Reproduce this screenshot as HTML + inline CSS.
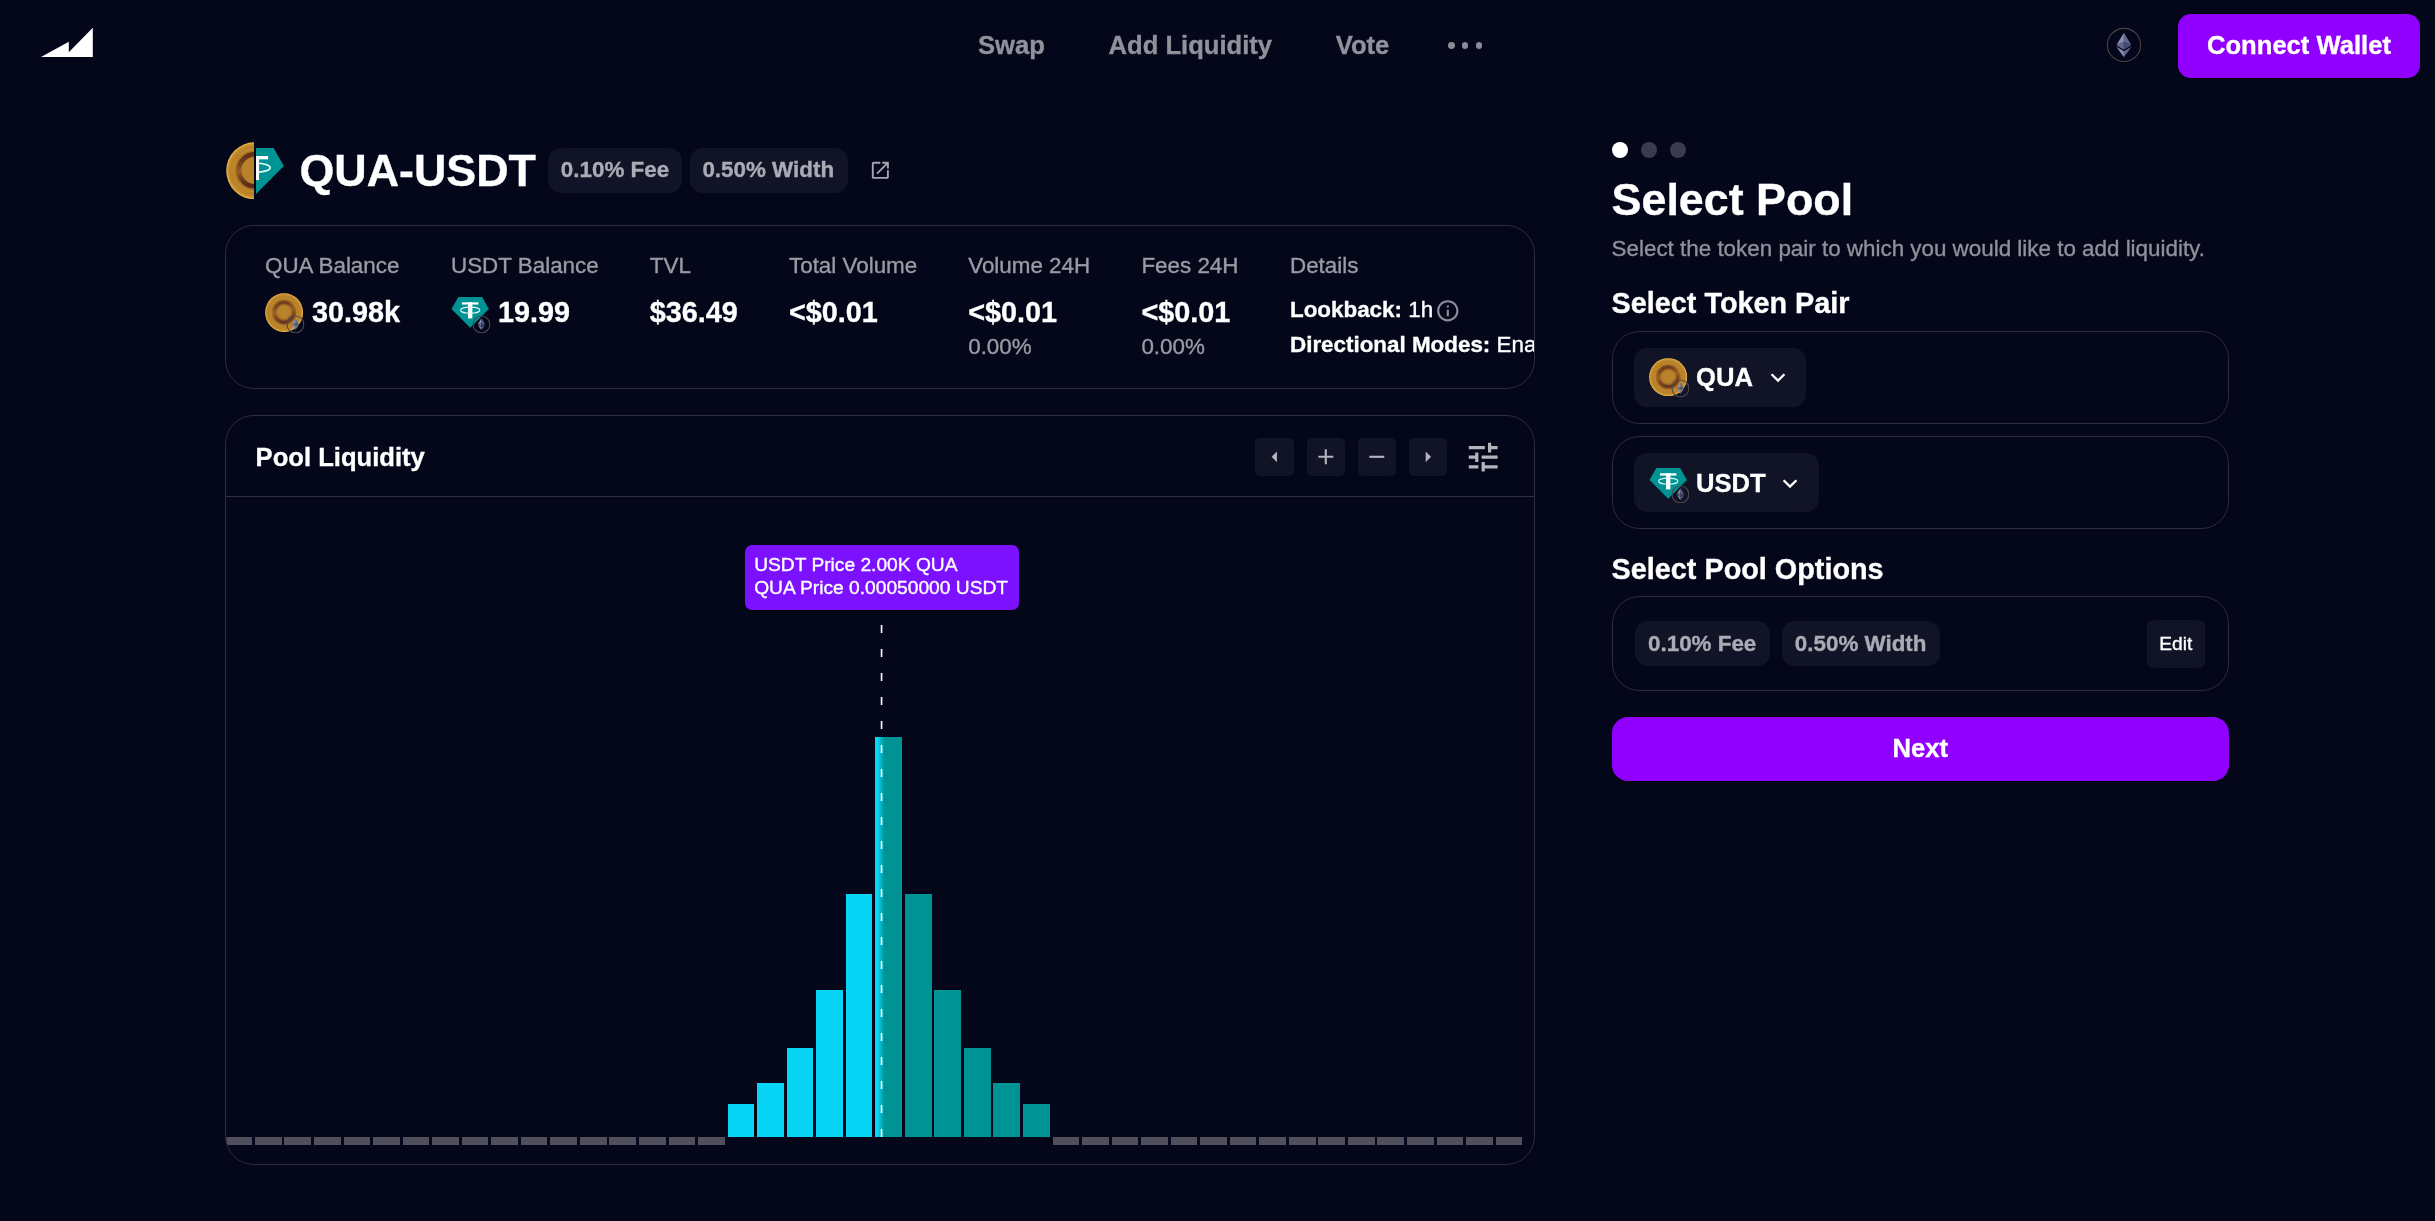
<!DOCTYPE html>
<html><head><meta charset="utf-8"><title>Maverick - Add Liquidity</title>
<style>
html,body{margin:0;padding:0;background:#04061A;}
body{width:2435px;height:1221px;position:relative;overflow:hidden;font-family:"Liberation Sans",sans-serif;}
.t{position:absolute;white-space:nowrap;line-height:1;-webkit-text-stroke:0.35px currentColor;}
.b{position:absolute;}
#root{position:absolute;left:0;top:0;width:2435px;height:1221px;will-change:transform;}
</style></head><body><div id="root">

<svg width="0" height="0" style="position:absolute">
<defs>
<radialGradient id="coinG" cx="50%" cy="50%" r="50%">
  <stop offset="0" stop-color="#B8822B"/><stop offset="0.86" stop-color="#B9832B"/><stop offset="0.94" stop-color="#CC9431"/><stop offset="0.985" stop-color="#EDB848"/><stop offset="1" stop-color="#F8CC5C"/>
</radialGradient>
<linearGradient id="ringG" x1="0" y1="0" x2="0.25" y2="1">
  <stop offset="0" stop-color="#5A2A1A"/><stop offset="0.22" stop-color="#6B3A1C"/><stop offset="0.5" stop-color="#9A5E21"/><stop offset="0.78" stop-color="#6B3A1C"/><stop offset="1" stop-color="#5A2A1A"/>
</linearGradient>
<filter id="blur2" x="-20%" y="-20%" width="140%" height="140%"><feGaussianBlur stdDeviation="2.1"/></filter>
<filter id="blur1" x="-20%" y="-20%" width="140%" height="140%"><feGaussianBlur stdDeviation="1.3"/></filter>
<symbol id="coin" viewBox="0 0 100 100">
  <circle cx="50" cy="50" r="49.6" fill="url(#coinG)"/>
  <circle cx="50" cy="49.5" r="29.5" fill="none" stroke="#A96D25" stroke-width="12.5" opacity="0.75"/>
  <circle cx="50" cy="49.5" r="36.4" fill="none" stroke="#D0982F" stroke-width="1.4" opacity="0.9"/>
  <g filter="url(#blur1)"><circle cx="50" cy="49.2" r="27.6" fill="none" stroke="url(#ringG)" stroke-width="8.2"/></g>
  <path d="M62 62 L72 72" stroke="#8A5220" stroke-width="5" filter="url(#blur1)" opacity="0.7"/>
</symbol>
<symbol id="coinS" viewBox="0 0 100 100" preserveAspectRatio="none">
  <circle cx="50" cy="50" r="49.6" fill="url(#coinG)"/>
  <circle cx="50" cy="49.5" r="27" fill="none" stroke="#A96D25" stroke-width="11" opacity="0.7"/>
  <circle cx="50" cy="49.5" r="33.5" fill="none" stroke="#D0982F" stroke-width="1.4" opacity="0.8"/>
  <g filter="url(#blur2)"><circle cx="50" cy="49.2" r="25.4" fill="none" stroke="url(#ringG)" stroke-width="8.4"/></g>
  <path d="M60 60 L69 69" stroke="#8A5220" stroke-width="5" filter="url(#blur2)" opacity="0.7"/>
</symbol>
<symbol id="gem" viewBox="0 0 100 100">
  <polygon points="19,10.2 81,10.2 98.7,41.8 50,90.8 1.3,41.8" fill="#009393"/>
  <rect x="28.6" y="24.3" width="42.8" height="5.8" fill="#fff"/>
  <rect x="44.4" y="24.3" width="11.2" height="41.8" fill="#fff"/>
  <ellipse cx="50" cy="44.6" rx="25" ry="7.8" fill="none" stroke="#E4F7F5" stroke-width="2.8"/>
</symbol>
<symbol id="eth" viewBox="0 0 16 26">
  <polygon points="8,0 0,13.2 8,9.6" fill="#8A92B2"/>
  <polygon points="8,0 16,13.2 8,9.6" fill="#62688F"/>
  <polygon points="0,13.2 8,9.6 8,18" fill="#62688F"/>
  <polygon points="16,13.2 8,9.6 8,18" fill="#454A75"/>
  <polygon points="0,14.7 8,19.5 8,26" fill="#8A92B2"/>
  <polygon points="16,14.7 8,19.5 8,26" fill="#62688F"/>
</symbol>
</defs>
</svg>

<svg class="b" style="left:30.00px;top:15.00px;" width="80.00" height="55.00"><polygon points="11,41.9 38.8,26.8 38.8,37.2 62.8,12.8 62.8,41.9" fill="#fff"/></svg>
<div class="t" style="left:978.00px;top:33.00px;font-size:25.6px;font-weight:700;color:#91919B;">Swap</div>
<div class="t" style="left:1108.60px;top:33.00px;font-size:25.6px;font-weight:700;color:#91919B;">Add Liquidity</div>
<div class="t" style="left:1335.80px;top:33.00px;font-size:25.6px;font-weight:700;color:#91919B;">Vote</div>
<div class="b" style="left:1447.90px;top:42.10px;width:6.80px;height:6.80px;border-radius:50%;background:#8A8A96"></div>
<div class="b" style="left:1461.70px;top:42.10px;width:6.80px;height:6.80px;border-radius:50%;background:#8A8A96"></div>
<div class="b" style="left:1475.50px;top:42.10px;width:6.80px;height:6.80px;border-radius:50%;background:#8A8A96"></div>
<svg class="b" style="left:2104.00px;top:25.00px;" width="40.00" height="40.00"><circle cx="20" cy="19.9" r="16.6" fill="none" stroke="#484543" stroke-width="1.15"/><use href="#eth" x="12.1" y="7.8" width="15.6" height="24.5"/></svg>
<div class="b" style="left:2178.00px;top:14.00px;width:242.00px;height:64.00px;border-radius:12.8px;background:#9100FF;box-shadow:0 1px 2px rgba(0,0,0,.6)"></div>
<div class="t" style="left:2207.00px;top:33.00px;font-size:25.6px;font-weight:700;color:#FFFFFF;">Connect Wallet</div>
<div class="b" style="left:225.6px;top:141.7px;width:28.6px;height:57.6px;overflow:hidden"><svg width="57.6" height="57.6" style="position:absolute;left:0;top:0"><use href="#coin" width="57.6" height="57.6"/></svg></div>
<div class="b" style="left:255.9px;top:141.7px;width:29.4px;height:57.6px;overflow:hidden"><svg width="57.6" height="57.6" style="position:absolute;left:-28.8px;top:0px"><use href="#gem" width="57.6" height="57.6"/></svg></div>
<div class="t" style="left:299.50px;top:148.00px;font-size:44.8px;font-weight:700;color:#FFFFFF;">QUA-USDT</div>
<div class="b" style="left:548.00px;top:148.00px;width:134.00px;height:45.00px;border-radius:12.8px;background:#111326"></div>
<div class="t" style="left:560.80px;top:159.00px;font-size:22.4px;font-weight:700;color:#ABABB5;">0.10% Fee</div>
<div class="b" style="left:690.00px;top:148.00px;width:158.00px;height:45.00px;border-radius:12.8px;background:#111326"></div>
<div class="t" style="left:702.40px;top:159.00px;font-size:22.4px;font-weight:700;color:#ABABB5;">0.50% Width</div>
<svg class="b" style="left:868.95px;top:158.75px;" width="22.70" height="22.70" viewBox="0 0 24 24"><path d="M19 19H5V5h7V3H5c-1.11 0-2 .9-2 2v14c0 1.1.89 2 2 2h14c1.1 0 2-.9 2-2v-7h-2v7zM14 3v2h3.59l-9.83 9.83 1.41 1.41L19 6.41V10h2V3h-7z" fill="#A6A6B1"/></svg>
<div class="b" style="left:225.00px;top:225.00px;width:1310.00px;height:164.00px;border:1px solid #2C2D41;border-radius:28.8px;box-sizing:border-box"></div>
<div class="b" style="left:226px;top:226px;width:1308px;height:162px;overflow:hidden">
<div class="t" style="left:39.00px;top:29.00px;font-size:22.4px;font-weight:400;color:#9B9BA4;">QUA Balance</div>
<div class="t" style="left:225.00px;top:29.00px;font-size:22.4px;font-weight:400;color:#9B9BA4;">USDT Balance</div>
<div class="t" style="left:423.80px;top:29.00px;font-size:22.4px;font-weight:400;color:#9B9BA4;">TVL</div>
<div class="t" style="left:563.00px;top:29.00px;font-size:22.4px;font-weight:400;color:#9B9BA4;">Total Volume</div>
<div class="t" style="left:742.20px;top:29.00px;font-size:22.4px;font-weight:400;color:#9B9BA4;">Volume 24H</div>
<div class="t" style="left:915.40px;top:29.00px;font-size:22.4px;font-weight:400;color:#9B9BA4;">Fees 24H</div>
<div class="t" style="left:1064.00px;top:29.00px;font-size:22.4px;font-weight:400;color:#9B9BA4;">Details</div>
<div class="t" style="left:86.00px;top:72.00px;font-size:28.8px;font-weight:700;color:#FFFFFF;">30.98k</div>
<div class="t" style="left:272.00px;top:72.00px;font-size:28.8px;font-weight:700;color:#FFFFFF;">19.99</div>
<div class="t" style="left:423.80px;top:72.00px;font-size:28.8px;font-weight:700;color:#FFFFFF;">$36.49</div>
<div class="t" style="left:563.00px;top:72.00px;font-size:28.8px;font-weight:700;color:#FFFFFF;">&lt;$0.01</div>
<div class="t" style="left:742.20px;top:72.00px;font-size:28.8px;font-weight:700;color:#FFFFFF;">&lt;$0.01</div>
<div class="t" style="left:915.40px;top:72.00px;font-size:28.8px;font-weight:700;color:#FFFFFF;">&lt;$0.01</div>
<div class="t" style="left:742.20px;top:110.00px;font-size:22.4px;font-weight:400;color:#9B9BA4;">0.00%</div>
<div class="t" style="left:915.40px;top:110.00px;font-size:22.4px;font-weight:400;color:#9B9BA4;">0.00%</div>
<div class="t" style="left:1064.00px;top:73.00px;font-size:22.4px;font-weight:700;color:#FFFFFF;">Lookback: <span style="font-weight:400">1h</span></div>
<div class="t" style="left:1064.00px;top:108.00px;font-size:22.4px;font-weight:700;color:#FFFFFF;">Directional Modes: <span style="font-weight:400">Enabled</span></div>
</div>
<svg class="b" style="left:264.90px;top:292.90px;" width="38.20" height="39.20"><use href="#coinS" width="38.2" height="39.2"/></svg>
<svg class="b" style="left:286.10px;top:314.50px;" width="18.80" height="18.80"><circle cx="9.4" cy="9.4" r="8.4" fill="none" stroke="#4D4A48" stroke-width="1.1"/><use href="#eth" x="5.800000000000001" y="2.9000000000000004" width="7.2" height="12.6"/></svg>
<svg class="b" style="left:451.00px;top:293.30px;" width="38.40" height="38.40"><use href="#gem" width="38.4" height="38.4"/></svg>
<svg class="b" style="left:472.00px;top:314.60px;" width="18.80" height="18.80"><circle cx="9.4" cy="9.4" r="8.4" fill="none" stroke="#4D4A48" stroke-width="1.1"/><use href="#eth" x="5.800000000000001" y="2.9000000000000004" width="7.2" height="12.6"/></svg>
<svg class="b" style="left:1435.00px;top:298.00px;" width="25.60" height="25.60" viewBox="0 0 24 24"><path d="M11 7h2v2h-2zm0 4h2v6h-2zm1-9C6.48 2 2 6.48 2 12s4.48 10 10 10 10-4.48 10-10S17.520 2 12 2zm0 18c-4.410 0-8-3.590-8-8s3.590-8 8-8 8 3.590 8 8-3.590 8-8 8z" fill="#8E8E9A"/></svg>
<div class="b" style="left:225.00px;top:415.00px;width:1310.00px;height:750.00px;border:1px solid #2C2D41;border-radius:28.8px;box-sizing:border-box"></div>
<div class="b" style="left:226px;top:416px;width:1308px;height:748px;overflow:hidden;border-radius:27.8px">
<div class="b" style="left:-0.60px;top:721.00px;width:26.70px;height:7.80px;background:#504F5B"></div>
<div class="b" style="left:28.94px;top:721.00px;width:26.70px;height:7.80px;background:#504F5B"></div>
<div class="b" style="left:58.48px;top:721.00px;width:26.70px;height:7.80px;background:#504F5B"></div>
<div class="b" style="left:88.02px;top:721.00px;width:26.70px;height:7.80px;background:#504F5B"></div>
<div class="b" style="left:117.56px;top:721.00px;width:26.70px;height:7.80px;background:#504F5B"></div>
<div class="b" style="left:147.10px;top:721.00px;width:26.70px;height:7.80px;background:#504F5B"></div>
<div class="b" style="left:176.64px;top:721.00px;width:26.70px;height:7.80px;background:#504F5B"></div>
<div class="b" style="left:206.18px;top:721.00px;width:26.70px;height:7.80px;background:#504F5B"></div>
<div class="b" style="left:235.72px;top:721.00px;width:26.70px;height:7.80px;background:#504F5B"></div>
<div class="b" style="left:265.26px;top:721.00px;width:26.70px;height:7.80px;background:#504F5B"></div>
<div class="b" style="left:294.80px;top:721.00px;width:26.70px;height:7.80px;background:#504F5B"></div>
<div class="b" style="left:324.34px;top:721.00px;width:26.70px;height:7.80px;background:#504F5B"></div>
<div class="b" style="left:353.88px;top:721.00px;width:26.70px;height:7.80px;background:#504F5B"></div>
<div class="b" style="left:383.42px;top:721.00px;width:26.70px;height:7.80px;background:#504F5B"></div>
<div class="b" style="left:412.96px;top:721.00px;width:26.70px;height:7.80px;background:#504F5B"></div>
<div class="b" style="left:442.50px;top:721.00px;width:26.70px;height:7.80px;background:#504F5B"></div>
<div class="b" style="left:472.04px;top:721.00px;width:26.70px;height:7.80px;background:#504F5B"></div>
<div class="b" style="left:501.58px;top:688.00px;width:26.70px;height:33.00px;background:#08D5F5"></div>
<div class="b" style="left:531.12px;top:667.00px;width:26.70px;height:54.00px;background:#08D5F5"></div>
<div class="b" style="left:560.66px;top:631.50px;width:26.70px;height:89.50px;background:#08D5F5"></div>
<div class="b" style="left:590.20px;top:573.50px;width:26.70px;height:147.50px;background:#08D5F5"></div>
<div class="b" style="left:619.74px;top:478.00px;width:26.70px;height:243.00px;background:#08D5F5"></div>
<div class="b" style="left:649.28px;top:321.00px;width:26.70px;height:400.00px;background:linear-gradient(90deg,#08D5F5 0,#08D5F5 2.7px,#009393 9.4px,#009393 100%)"></div>
<div class="b" style="left:678.82px;top:478.00px;width:26.70px;height:243.00px;background:#009393"></div>
<div class="b" style="left:708.36px;top:573.50px;width:26.70px;height:147.50px;background:#009393"></div>
<div class="b" style="left:737.90px;top:631.50px;width:26.70px;height:89.50px;background:#009393"></div>
<div class="b" style="left:767.44px;top:667.00px;width:26.70px;height:54.00px;background:#009393"></div>
<div class="b" style="left:796.98px;top:688.00px;width:26.70px;height:33.00px;background:#009393"></div>
<div class="b" style="left:826.52px;top:721.00px;width:26.70px;height:7.80px;background:#504F5B"></div>
<div class="b" style="left:856.06px;top:721.00px;width:26.70px;height:7.80px;background:#504F5B"></div>
<div class="b" style="left:885.60px;top:721.00px;width:26.70px;height:7.80px;background:#504F5B"></div>
<div class="b" style="left:915.14px;top:721.00px;width:26.70px;height:7.80px;background:#504F5B"></div>
<div class="b" style="left:944.68px;top:721.00px;width:26.70px;height:7.80px;background:#504F5B"></div>
<div class="b" style="left:974.22px;top:721.00px;width:26.70px;height:7.80px;background:#504F5B"></div>
<div class="b" style="left:1003.76px;top:721.00px;width:26.70px;height:7.80px;background:#504F5B"></div>
<div class="b" style="left:1033.30px;top:721.00px;width:26.70px;height:7.80px;background:#504F5B"></div>
<div class="b" style="left:1062.84px;top:721.00px;width:26.70px;height:7.80px;background:#504F5B"></div>
<div class="b" style="left:1092.38px;top:721.00px;width:26.70px;height:7.80px;background:#504F5B"></div>
<div class="b" style="left:1121.92px;top:721.00px;width:26.70px;height:7.80px;background:#504F5B"></div>
<div class="b" style="left:1151.46px;top:721.00px;width:26.70px;height:7.80px;background:#504F5B"></div>
<div class="b" style="left:1181.00px;top:721.00px;width:26.70px;height:7.80px;background:#504F5B"></div>
<div class="b" style="left:1210.54px;top:721.00px;width:26.70px;height:7.80px;background:#504F5B"></div>
<div class="b" style="left:1240.08px;top:721.00px;width:26.70px;height:7.80px;background:#504F5B"></div>
<div class="b" style="left:1269.62px;top:721.00px;width:26.70px;height:7.80px;background:#504F5B"></div>
</div>
<div class="t" style="left:255.60px;top:445.00px;font-size:25.6px;font-weight:700;color:#FFFFFF;">Pool Liquidity</div>
<div class="b" style="left:226.00px;top:496.00px;width:1308.00px;height:1.00px;background:#2C2D41"></div>
<div class="b" style="left:1255.00px;top:438.00px;width:39.00px;height:38.00px;border-radius:4.8px;background:#111326"></div>
<svg class="b" style="left:1261.80px;top:444.20px;" width="25.60" height="25.60" viewBox="0 0 24 24"><path d="M14 7l-5 5 5 5V7z" fill="#B4B4BC"/></svg>
<div class="b" style="left:1307.00px;top:438.00px;width:38.00px;height:38.00px;border-radius:4.8px;background:#111326"></div>
<svg class="b" style="left:1313.00px;top:444.20px;" width="25.60" height="25.60" viewBox="0 0 24 24"><path d="M19 13h-6v6h-2v-6H5v-2h6V5h2v6h6v2z" fill="#B4B4BC"/></svg>
<div class="b" style="left:1358.00px;top:438.00px;width:38.00px;height:38.00px;border-radius:4.8px;background:#111326"></div>
<svg class="b" style="left:1364.20px;top:444.20px;" width="25.60" height="25.60" viewBox="0 0 24 24"><path d="M19 13H5v-2h14v2z" fill="#B4B4BC"/></svg>
<div class="b" style="left:1409.00px;top:438.00px;width:38.00px;height:38.00px;border-radius:4.8px;background:#111326"></div>
<svg class="b" style="left:1415.40px;top:444.20px;" width="25.60" height="25.60" viewBox="0 0 24 24"><path d="M10 17l5-5-5-5v10z" fill="#B4B4BC"/></svg>
<svg class="b" style="left:1464.00px;top:438.00px;" width="38.40" height="38.40" viewBox="0 0 24 24"><path d="M3 17v2h6v-2H3zM3 5v2h10V5H3zm10 16v-2h8v-2h-8v-2h-2v6h2zM7 9v2H3v2h4v2h2V9H7zm14 4v-2H11v2h10zm-6-4h2V7h4V5h-4V3h-2v6z" fill="#B4B4BC"/></svg>
<div class="b" style="left:744.50px;top:544.60px;width:274.30px;height:65.00px;border-radius:7px;background:#7C11FF"></div>
<div class="t" style="left:754.20px;top:555.00px;font-size:19.2px;font-weight:400;color:#FFFFFF;">USDT Price 2.00K QUA</div>
<div class="t" style="left:754.20px;top:578.00px;font-size:19.2px;font-weight:400;color:#FFFFFF;">QUA Price 0.00050000 USDT</div>
<svg class="b" style="left:879.00px;top:620.00px;" width="5.00" height="520.00"><line x1="2.55" y1="5.0" x2="2.55" y2="517" stroke="#fff" stroke-width="1.6" stroke-dasharray="8 16"/></svg>
<div class="b" style="left:1612.00px;top:142.00px;width:16.00px;height:16.00px;border-radius:50%;background:#fff"></div>
<div class="b" style="left:1641.00px;top:142.00px;width:16.00px;height:16.00px;border-radius:50%;background:#3A3B4E"></div>
<div class="b" style="left:1670.00px;top:142.00px;width:16.00px;height:16.00px;border-radius:50%;background:#3A3B4E"></div>
<div class="t" style="left:1611.60px;top:177.00px;font-size:44.8px;font-weight:700;color:#FFFFFF;">Select Pool</div>
<div class="t" style="left:1611.60px;top:238.00px;font-size:22.4px;font-weight:400;color:#91919B;">Select the token pair to which you would like to add liquidity.</div>
<div class="t" style="left:1611.60px;top:289.00px;font-size:28.8px;font-weight:700;color:#FFFFFF;">Select Token Pair</div>
<div class="b" style="left:1612.00px;top:331.00px;width:617.00px;height:93.00px;border:1px solid #2C2D41;border-radius:27.5px;box-sizing:border-box"></div>
<div class="b" style="left:1612.00px;top:436.00px;width:617.00px;height:93.00px;border:1px solid #2C2D41;border-radius:27.5px;box-sizing:border-box"></div>
<div class="b" style="left:1634.00px;top:348.00px;width:172.00px;height:59.00px;border-radius:12.8px;background:#111326"></div>
<div class="b" style="left:1634.00px;top:453.00px;width:185.00px;height:59.00px;border-radius:12.8px;background:#111326"></div>
<svg class="b" style="left:1649.40px;top:357.80px;" width="38.40" height="38.40"><use href="#coinS" width="38.4" height="38.4"/></svg>
<svg class="b" style="left:1670.50px;top:379.20px;" width="18.80" height="18.80"><circle cx="9.4" cy="9.4" r="8.4" fill="none" stroke="#4D4A48" stroke-width="1.1"/><use href="#eth" x="5.800000000000001" y="2.9000000000000004" width="7.2" height="12.6"/></svg>
<svg class="b" style="left:1649.40px;top:463.60px;" width="38.40" height="38.40"><use href="#gem" width="38.4" height="38.4"/></svg>
<svg class="b" style="left:1670.50px;top:484.50px;" width="18.80" height="18.80"><circle cx="9.4" cy="9.4" r="8.4" fill="none" stroke="#4D4A48" stroke-width="1.1"/><use href="#eth" x="5.800000000000001" y="2.9000000000000004" width="7.2" height="12.6"/></svg>
<div class="t" style="left:1696.00px;top:365.00px;font-size:25.6px;font-weight:700;color:#FFFFFF;">QUA</div>
<div class="t" style="left:1696.00px;top:471.00px;font-size:25.6px;font-weight:700;color:#FFFFFF;">USDT</div>
<svg class="b" style="left:1768.00px;top:368.00px;" width="20.00" height="20.00"><polyline points="3.6,6.2 10,12.6 16.4,6.2" fill="none" stroke="#fff" stroke-width="2.3"/></svg>
<svg class="b" style="left:1780.00px;top:473.60px;" width="20.00" height="20.00"><polyline points="3.6,6.2 10,12.6 16.4,6.2" fill="none" stroke="#fff" stroke-width="2.3"/></svg>
<div class="t" style="left:1611.60px;top:555.00px;font-size:28.8px;font-weight:700;color:#FFFFFF;">Select Pool Options</div>
<div class="b" style="left:1612.00px;top:596.00px;width:617.00px;height:95.00px;border:1px solid #2C2D41;border-radius:27.5px;box-sizing:border-box"></div>
<div class="b" style="left:1635.00px;top:621.00px;width:135.00px;height:45.00px;border-radius:12.8px;background:#111326"></div>
<div class="t" style="left:1648.00px;top:633.00px;font-size:22.4px;font-weight:700;color:#ABABB5;">0.10% Fee</div>
<div class="b" style="left:1782.00px;top:621.00px;width:158.00px;height:45.00px;border-radius:12.8px;background:#111326"></div>
<div class="t" style="left:1794.80px;top:633.00px;font-size:22.4px;font-weight:700;color:#ABABB5;">0.50% Width</div>
<div class="b" style="left:2147.00px;top:620.00px;width:58.00px;height:48.00px;border-radius:6.4px;background:#111326"></div>
<div class="t" style="left:2159.20px;top:634.00px;font-size:19.2px;font-weight:400;color:#FFFFFF;">Edit</div>
<div class="b" style="left:1612.00px;top:717.00px;width:617.00px;height:64.00px;border-radius:16px;background:#9100FF;box-shadow:0 1px 2px rgba(0,0,0,.6)"></div>
<div class="t" style="left:1892.60px;top:736.00px;font-size:25.6px;font-weight:700;color:#FFFFFF;">Next</div>
</div></body></html>
